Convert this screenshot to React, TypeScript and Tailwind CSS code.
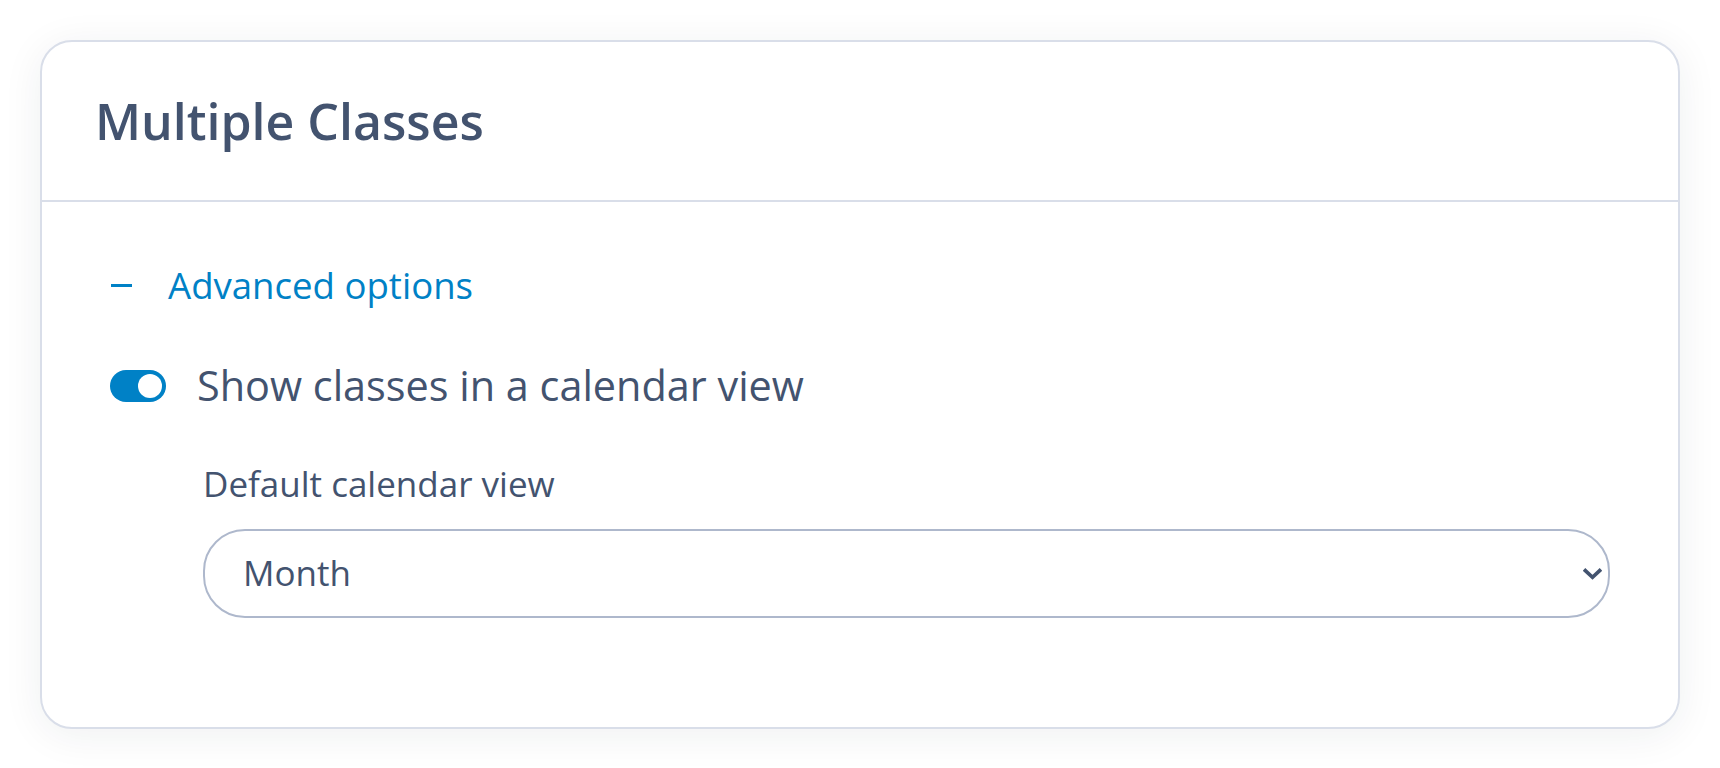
import { useState } from 'react';

// Settings card: "Multiple Classes" with advanced options expanded.
const FONT = "font-['Open_Sans',sans-serif]";

function Toggle({ on, onChange }: { on: boolean; onChange: (v: boolean) => void }) {
  return (
    <button
      type="button"
      role="switch"
      aria-checked={on}
      onClick={() => onChange(!on)}
      className={`flex h-[32px] w-[56px] shrink-0 items-center rounded-full p-[4px] ${
        on ? 'justify-end bg-[#0081c6]' : 'justify-start bg-[#c3cad8]'
      }`}
    >
      <span className="h-[24px] w-[24px] rounded-full bg-white" />
    </button>
  );
}

export default function App() {
  const [calendar, setCalendar] = useState(true);
  const [view, setView] = useState('month');

  return (
    <div className={`min-h-screen bg-white pl-[40px] pt-[40px] ${FONT} text-[#43536f]`}>
      <div className="w-[1640px] rounded-[32px] border-2 border-[#d9dee9] bg-white shadow-[0_6px_40px_rgba(30,40,60,0.07)]">
        <div className="flex h-[160px] items-center border-b-2 border-[#d9dee9] pl-[53px]">
          <h2 className="text-[50px] font-semibold leading-none">Multiple Classes</h2>
        </div>

        <div className="pb-[109px] pl-[68px] pr-[68px] pt-[63px]">
          <button type="button" className="flex h-[40px] items-center text-[#0081c6]">
            <span className="ml-[1px] h-[3px] w-[21px] bg-[#0081c6]" />
            <span className="ml-[36px] text-[36.6px] leading-none">Advanced options</span>
          </button>

          <div className="mt-[59px] flex h-[44px] items-center">
            <Toggle on={calendar} onChange={setCalendar} />
            <span className="ml-[31px] text-[41.4px] leading-none">Show classes in a calendar view</span>
          </div>

          {calendar && (
            <div className="ml-[93px] mt-[52px]">
              <label htmlFor="calendar-view" className="block text-[35px] leading-[48px]">
                Default calendar view
              </label>
              <div className="relative mt-[21px]">
                <select
                  id="calendar-view"
                  value={view}
                  onChange={e => setView(e.target.value)}
                  className="h-[89px] w-full appearance-none rounded-[42px] border-2 border-[#aeb8cc] bg-white pl-[38px] pr-[60px] text-[35px] text-[#43536f] outline-none"
                >
                  <option value="month">Month</option>
                  <option value="week">Week</option>
                  <option value="day">Day</option>
                </select>
                <svg
                  viewBox="0 0 20 12"
                  className="pointer-events-none absolute right-[8px] top-[39px] h-[12px] w-[19px]"
                  fill="none"
                  stroke="#43536f"
                  strokeWidth="3.8"
                  strokeLinecap="square"
                >
                  <path d="M2.5 2.5 L10 9.5 L17.5 2.5" />
                </svg>
              </div>
            </div>
          )}
        </div>
      </div>
    </div>
  );
}
